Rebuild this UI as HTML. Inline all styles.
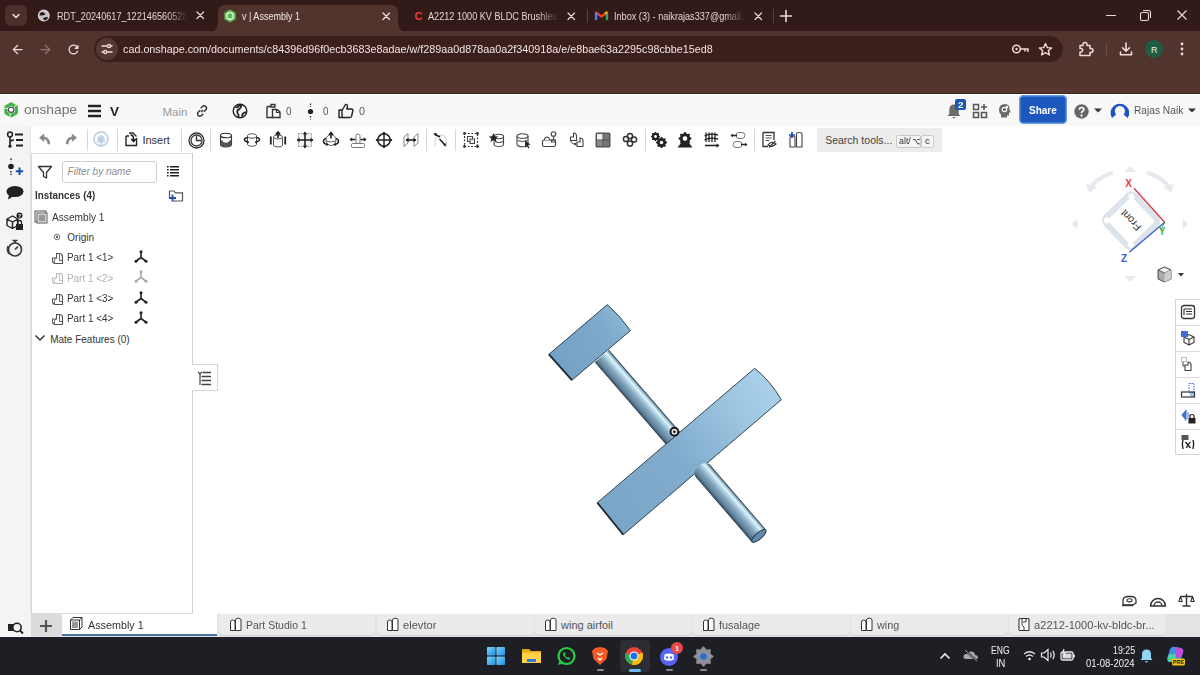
<!DOCTYPE html>
<html><head><meta charset="utf-8"><title>v | Assembly 1</title>
<style>
*{margin:0;padding:0;box-sizing:border-box}
html,body{width:1200px;height:675px;overflow:hidden;background:#fff;font-family:"Liberation Sans",sans-serif}
.a{position:absolute}
.t{position:absolute;white-space:nowrap;line-height:1;font-family:"Liberation Sans",sans-serif}
svg{position:absolute;overflow:visible}
</style></head><body>
<div class="a" style="left:0px;top:0px;width:1200px;height:31px;background:#311a17;"></div>
<div class="a" style="left:5px;top:5px;width:22px;height:21px;background:#4b302c;border-radius:6px;"></div>
<svg style="left:10px;top:10px;" width="12" height="12" viewBox="0 0 12 12"><path d="M3 4.5 L6 7.5 L9 4.5" fill="none" stroke="#eadcd8" stroke-width="1.6" stroke-linecap="round" stroke-linejoin="round"/></svg>
<svg style="left:208px;top:4px" width="200" height="28" viewBox="0 0 200 28"><path d="M0 28 Q10 28 10 18 L10 9 Q10 1 18 1 L182 1 Q190 1 190 9 L190 18 Q190 28 200 28 Z" fill="#52342f"/></svg>
<svg style="left:37px;top:9px;" width="14" height="14" viewBox="0 0 14 14"><circle cx="6.8" cy="6.5" r="5.4" fill="#c4c4c8" stroke="#dccfcc" stroke-width="1.1"/><path d="M2.6 5 Q3.8 2.6 6.3 3 Q6.8 4.4 8.6 4.8 Q7.8 6.8 5.2 6.2 Q3.8 6.8 2.6 6.2 Z" fill="#241417"/><path d="M5.8 9.8 Q7.6 7.6 10.8 8 Q11 10.2 8.6 11.2 Q7 11.4 5.8 9.8 Z" fill="#241417"/></svg>
<div class="t" style="left:56.70px;top:10.57px;font-size:11px;color:#e3d3cf;transform:scaleX(0.830);transform-origin:0.00px 0;width:161.4px;overflow:hidden;-webkit-mask-image:linear-gradient(90deg,#000 82%,transparent 98%);">RDT_20240617_1221465605285</div>
<div class="t" style="left:242.00px;top:10.87px;font-size:11px;color:#f3e7e4;transform:scaleX(0.820);transform-origin:0.00px 0;">v | Assembly 1</div>
<div class="t" style="left:428.20px;top:10.87px;font-size:11px;color:#e3d3cf;transform:scaleX(0.830);transform-origin:0.00px 0;width:161.4px;overflow:hidden;-webkit-mask-image:linear-gradient(90deg,#000 82%,transparent 98%);">A2212 1000 KV BLDC Brushless</div>
<div class="t" style="left:614.00px;top:10.87px;font-size:11px;color:#e3d3cf;transform:scaleX(0.830);transform-origin:0.00px 0;width:161.4px;overflow:hidden;-webkit-mask-image:linear-gradient(90deg,#000 82%,transparent 98%);">Inbox (3) - naikrajas337@gmail.com</div>
<svg style="left:194.75px;top:10.25px;" width="10.5" height="10.5" viewBox="0 0 10.5 10.5"><path d="M2 2 L8.5 8.5 M8.5 2 L2 8.5" stroke="#eadbd7" stroke-width="1.2" stroke-linecap="round"/></svg>
<svg style="left:380.75px;top:10.75px;" width="10.5" height="10.5" viewBox="0 0 10.5 10.5"><path d="M2 2 L8.5 8.5 M8.5 2 L2 8.5" stroke="#f3e7e4" stroke-width="1.2" stroke-linecap="round"/></svg>
<svg style="left:566.15px;top:10.75px;" width="10.5" height="10.5" viewBox="0 0 10.5 10.5"><path d="M2 2 L8.5 8.5 M8.5 2 L2 8.5" stroke="#eadbd7" stroke-width="1.2" stroke-linecap="round"/></svg>
<svg style="left:752.75px;top:10.75px;" width="10.5" height="10.5" viewBox="0 0 10.5 10.5"><path d="M2 2 L8.5 8.5 M8.5 2 L2 8.5" stroke="#eadbd7" stroke-width="1.2" stroke-linecap="round"/></svg>
<div class="a" style="left:587px;top:9px;width:1px;height:14px;background:#5e433f;"></div>
<div class="a" style="left:773px;top:9px;width:1px;height:14px;background:#5e433f;"></div>
<svg style="left:779px;top:9px;" width="14" height="14" viewBox="0 0 14 14"><path d="M7 1.5 V12.5 M1.5 7 H12.5" stroke="#eadbd7" stroke-width="1.6" stroke-linecap="round"/></svg>
<svg style="left:223px;top:9px;" width="14" height="14" viewBox="0 0 14 14"><path d="M7 0.5 L12.7 3.8 L12.7 10.2 L7 13.5 L1.3 10.2 L1.3 3.8 Z" fill="#59b94a"/><circle cx="7" cy="7" r="3.3" fill="none" stroke="#e9f5e6" stroke-width="1.4"/><path d="M7 3.7 V7" stroke="#59b94a" stroke-width="1.2"/></svg>
<div class="t" style="left:414.50px;top:11.37px;font-size:11px;color:#e0413a;font-weight:bold;">C</div>
<svg style="left:595px;top:10px;" width="13" height="11" viewBox="0 0 13 11"><path d="M1 10 V2.5 L6.5 6.5 L12 2.5 V10" fill="none" stroke="#ea4335" stroke-width="2.2" stroke-linejoin="round"/><path d="M1 10 V3" stroke="#4285f4" stroke-width="2.2"/><path d="M12 10 V3" stroke="#34a853" stroke-width="2.2"/><path d="M10 3.5 L12 2.2" stroke="#fbbc04" stroke-width="2.2"/></svg>
<div class="a" style="left:1106px;top:15px;width:10px;height:1px;background:#e8dbd7;"></div>
<svg style="left:1139px;top:9px;" width="13" height="13" viewBox="0 0 13 13"><rect x="1.5" y="3.5" width="8" height="8" rx="1.5" fill="none" stroke="#e8dbd7" stroke-width="1.1"/><path d="M4 1.5 H9.5 Q11.5 1.5 11.5 3.5 V9" fill="none" stroke="#e8dbd7" stroke-width="1.1"/></svg>
<svg style="left:1175px;top:8px;" width="14" height="14" viewBox="0 0 14 14"><path d="M2.5 2.5 L11.5 11.5 M11.5 2.5 L2.5 11.5" stroke="#e8dbd7" stroke-width="1.2"/></svg>
<div class="a" style="left:0px;top:31px;width:1200px;height:62px;background:#52342f;border-radius:0 9px 0 0;"></div>
<div class="a" style="left:0;top:31px;width:1200px;height:62px;background:#52342f;"></div>
<div class="a" style="left:0px;top:88px;width:1200px;height:5px;background:#56362f;"></div>
<div class="a" style="left:0px;top:93px;width:1200px;height:1px;background:#3e2824;"></div>
<div class="a" style="left:94px;top:36px;width:969px;height:26px;background:#3b1f1c;border-radius:13px;"></div>
<svg style="left:9.7px;top:41.7px;" width="15" height="15" viewBox="0 0 24 24"><path d="M20 11H7.83l5.59-5.59L12 4l-8 8 8 8 1.41-1.41L7.83 13H20v-2z" fill="#ecdcd8"/></svg>
<svg style="left:37.5px;top:41.7px;" width="15" height="15" viewBox="0 0 24 24"><path d="M12 4l-1.41 1.41L16.17 11H4v2h12.17l-5.58 5.59L12 20l8-8z" fill="#8f746f"/></svg>
<svg style="left:65.8px;top:41.8px;" width="15" height="15" viewBox="0 0 24 24"><path d="M17.65 6.35A7.958 7.958 0 0 0 12 4c-4.42 0-7.99 3.58-7.99 8s3.57 8 7.99 8c3.73 0 6.84-2.55 7.73-6h-2.08A5.99 5.99 0 0 1 12 18c-3.31 0-6-2.69-6-6s2.69-6 6-6c1.66 0 3.14.69 4.22 1.78L13 11h7V4l-2.35 2.35z" fill="#ecdcd8"/></svg>
<div class="a" style="left:96px;top:38px;width:22px;height:22px;border-radius:11px;background:#543833"></div>
<svg style="left:99px;top:41px;" width="16" height="16" viewBox="0 0 16 16"><path d="M3 5 H8.5 M11 5 H13 M3 11 H5 M7.5 11 H13" stroke="#ecdcd8" stroke-width="1.4" stroke-linecap="round"/><circle cx="10" cy="5" r="1.6" fill="none" stroke="#ecdcd8" stroke-width="1.3"/><circle cx="6.2" cy="11" r="1.6" fill="none" stroke="#ecdcd8" stroke-width="1.3"/></svg>
<div class="t" style="left:123.00px;top:43.87px;font-size:11px;color:#f0e4e1;transform:scaleX(0.980);transform-origin:0.00px 0;">cad.onshape.com/documents/c84396d96f0ecb3683e8adae/w/f289aa0d878aa0a2f340918a/e/e8bae63a2295c98cbbe15ed8</div>
<svg style="left:1011px;top:42px;" width="20" height="14" viewBox="0 0 20 14"><circle cx="5.5" cy="7" r="3.8" fill="none" stroke="#ecdcd8" stroke-width="1.5"/><circle cx="5.5" cy="7" r="1.2" fill="#ecdcd8"/><path d="M9.3 7 H17 V10 M14 7 V9.5" fill="none" stroke="#ecdcd8" stroke-width="1.5"/></svg>
<svg style="left:1038px;top:42px;" width="15" height="15" viewBox="0 0 15 15"><path d="M7.5 1.5 L9.3 5.6 L13.6 5.9 L10.3 8.7 L11.4 13 L7.5 10.7 L3.6 13 L4.7 8.7 L1.4 5.9 L5.7 5.6 Z" fill="none" stroke="#ecdcd8" stroke-width="1.4" stroke-linejoin="round"/></svg>
<svg style="left:1077px;top:41px;" width="17" height="17" viewBox="0 0 17 17"><path d="M3 4.5 H6 V3.5 A2 2 0 0 1 10 3.5 V4.5 H13 V7.5 H14 A2 2 0 0 1 14 11.5 H13 V14.5 H3 V11 H4 A1.7 1.7 0 0 0 4 7.6 H3 Z" fill="none" stroke="#ecdcd8" stroke-width="1.5" stroke-linejoin="round"/></svg>
<div class="a" style="left:1106px;top:44px;width:1px;height:12px;background:#6b4f4a;"></div>
<svg style="left:1118px;top:41px;" width="16" height="16" viewBox="0 0 16 16"><path d="M8 2 V10 M4.5 6.8 L8 10.2 L11.5 6.8 M2.5 11 V13.8 H13.5 V11" fill="none" stroke="#ecdcd8" stroke-width="1.6" stroke-linecap="round" stroke-linejoin="round"/></svg>
<div class="a" style="left:1145px;top:40px;width:18px;height:18px;border-radius:9px;background:#1e5d45"></div>
<div class="t" style="left:1151.00px;top:45.53px;font-size:9px;color:#e6efe9;">R</div>
<svg style="left:1179px;top:41px;" width="6" height="16" viewBox="0 0 6 16"><circle cx="3" cy="3" r="1.4" fill="#ecdcd8"/><circle cx="3" cy="8" r="1.4" fill="#ecdcd8"/><circle cx="3" cy="13" r="1.4" fill="#ecdcd8"/></svg>
<div class="a" style="left:0px;top:94px;width:1200px;height:32px;background:#f8f8f8;"></div>
<div class="a" style="left:0px;top:94px;width:1200px;height:1px;background:#fdfdfd;"></div>
<svg style="left:2px;top:101px;" width="18" height="18" viewBox="0 0 18 18"><path d="M9.10 2.80 L14.30 5.80 L14.30 11.80 L9.10 14.80 L3.90 11.80 L3.90 5.80 Z" fill="none" stroke="#41b34a" stroke-width="3.2" stroke-linejoin="round"/><path d="M11.60 6.30 L16.10 2.60 M7.90 11.80 L8.10 16.80 M6.30 7.60 L1.10 7.00" stroke="#f8f8f8" stroke-width="0.9"/><circle cx="9.1" cy="8.8" r="2.7" fill="#fff" stroke="#5a5560" stroke-width="1.3"/></svg>
<div class="t" style="left:24.00px;top:103.09px;font-size:13.5px;color:#737373;transform:scaleX(1.024);transform-origin:0.00px 0;">onshape</div>
<svg style="left:87px;top:104px;" width="15" height="14" viewBox="0 0 15 14"><path d="M1 2 H14 M1 7 H14 M1 12 H14" stroke="#222" stroke-width="2.4"/></svg>
<div class="t" style="left:110.00px;top:106.12px;font-size:12.5px;color:#222;font-weight:bold;transform:scaleX(1.083);transform-origin:0.00px 0;">V</div>
<div class="t" style="left:162.50px;top:107.16px;font-size:11.5px;color:#9b9b9b;">Main</div>
<svg style="left:195px;top:104px;" width="14" height="14" viewBox="0 0 14 14"><path d="M6 8 L8 6" stroke="#333" stroke-width="1.4"/><path d="M5.2 6.2 L3.2 8.2 A2.3 2.3 0 0 0 6.5 11.5 L8.3 9.7" fill="none" stroke="#333" stroke-width="1.4"/><path d="M8.8 7.8 L10.8 5.8 A2.3 2.3 0 0 0 7.5 2.5 L5.7 4.3" fill="none" stroke="#333" stroke-width="1.4"/></svg>
<svg style="left:232px;top:103px;" width="16" height="16" viewBox="0 0 16 16"><circle cx="8" cy="8" r="6.8" fill="none" stroke="#222" stroke-width="1.4"/><path d="M3.5 4 Q6 5 6.5 3 Q8 1.8 9.5 2.2 Q9 5 7 6.5 Q4.5 7 5.5 10 Q7 11 6.5 14 M10 13.5 Q10 10.5 12.5 9.5 L14.5 9" fill="none" stroke="#222" stroke-width="1.8"/></svg>
<svg style="left:265px;top:103px;" width="17" height="16" viewBox="0 0 17 16"><path d="M2 3.5 H6 M2 3.5 V14.5 H8" fill="none" stroke="#333" stroke-width="1.4"/><path d="M6 1.5 H10 V4 H6 Z" fill="none" stroke="#333" stroke-width="1.3"/><path d="M7.5 6.5 H12 L15 9 V14.5 H7.5 Z" fill="none" stroke="#333" stroke-width="1.4"/><path d="M11.5 6.5 V9.5 H15" fill="none" stroke="#333" stroke-width="1.2"/></svg>
<div class="t" style="left:286.00px;top:105.78px;font-size:10.5px;color:#555;transform:scaleX(0.944);transform-origin:0.00px 0;">0</div>
<svg style="left:307px;top:103px;" width="7" height="17" viewBox="0 0 7 17"><path d="M3.5 0.5 V4 M3.5 13 V16.5" stroke="#333" stroke-width="1.3" stroke-dasharray="1.5 1.2"/><circle cx="3.5" cy="8.5" r="2.6" fill="#222"/></svg>
<div class="t" style="left:322.50px;top:105.78px;font-size:10.5px;color:#555;transform:scaleX(0.944);transform-origin:0.00px 0;">0</div>
<svg style="left:337px;top:102px;" width="18" height="17" viewBox="0 0 18 17"><path d="M2 8 H5 V15.5 H2 Z M5 8.5 L8.5 2.5 Q10.5 2 10.5 4.5 L9.8 7 H14.5 Q16.2 7.3 15.8 9 L14.5 14.5 Q14 15.5 12.8 15.5 H5" fill="none" stroke="#222" stroke-width="1.4" stroke-linejoin="round"/></svg>
<div class="t" style="left:359.00px;top:105.78px;font-size:10.5px;color:#555;transform:scaleX(1.030);transform-origin:0.00px 0;">0</div>
<svg style="left:946px;top:100px;" width="16" height="19" viewBox="0 0 16 19"><path d="M8 4.5 Q3.3 4.5 3.3 10 V14 L1.5 16 H14.5 L12.7 14 V10 Q12.7 4.5 8 4.5 Z M6.3 17 A1.8 1.8 0 0 0 9.7 17" fill="#6b6b6b"/></svg>
<div class="a" style="left:955px;top:99px;width:11px;height:11px;background:#1c56b6;border-radius:2px;"></div>
<div class="t" style="left:957.80px;top:100.75px;font-size:8.5px;color:#fff;font-weight:bold;transform:scaleX(1.145);transform-origin:0.00px 0;">2</div>
<svg style="left:972px;top:103px;" width="17" height="17" viewBox="0 0 17 17"><rect x="1.5" y="1.5" width="5" height="5" fill="none" stroke="#555" stroke-width="1.5"/><rect x="1.5" y="9.5" width="5" height="5" fill="none" stroke="#555" stroke-width="1.5"/><rect x="9.5" y="9.5" width="5" height="5" fill="none" stroke="#555" stroke-width="1.5"/><path d="M12 1 V7 M9 4 H15" stroke="#555" stroke-width="1.6"/></svg>
<svg style="left:997px;top:102px;" width="17" height="17" viewBox="0 0 17 17"><path d="M8 2 Q2 2 2 8 Q2 11 4 12.5 V15.5 H10 V13.5 H12 V10.5 H14 L12.5 8 Q13 2 8 2 Z" fill="#6b6b6b"/><circle cx="7.5" cy="7.5" r="2.2" fill="none" stroke="#f8f8f8" stroke-width="1.2"/><circle cx="10" cy="5" r="1.2" fill="#f8f8f8"/></svg>
<div class="a" style="left:1019px;top:95px;width:48px;height:28.5px;background:#1b57bd;border-radius:5px;box-shadow:0 0 0 1.5px #6b9be6 inset;"></div>
<div class="t" style="left:1029.20px;top:104.77px;font-size:11px;color:#ffffff;font-weight:bold;transform:scaleX(0.906);transform-origin:0.00px 0;">Share</div>
<svg style="left:1074px;top:104px;" width="15" height="15" viewBox="0 0 15 15"><circle cx="7.5" cy="7.5" r="7.2" fill="#666"/><path d="M5.3 5.8 Q5.3 3.5 7.5 3.5 Q9.8 3.5 9.8 5.6 Q9.8 6.9 8.3 7.6 Q7.5 8 7.5 9.2" fill="none" stroke="#fff" stroke-width="1.7"/><circle cx="7.5" cy="11.6" r="1.1" fill="#fff"/></svg>
<svg style="left:1094px;top:108px;" width="8" height="5" viewBox="0 0 8 5"><path d="M0 0.5 H8 L4 4.5 Z" fill="#333"/></svg>
<svg style="left:1110px;top:100px;" width="20" height="20" viewBox="0 0 20 20"><path d="M2 18 A9.3 9.3 0 1 1 17.8 18 L13.6 14.6 A5.1 5.1 0 1 0 6.2 14.6 Z" fill="#1b52c4"/></svg>
<div class="t" style="left:1133.70px;top:105.27px;font-size:11px;color:#555;transform:scaleX(0.926);transform-origin:0.00px 0;">Rajas Naik</div>
<svg style="left:1188px;top:108px;" width="9" height="5" viewBox="0 0 9 5"><path d="M0 0.5 H8 L4 4.5 Z" fill="#333"/></svg>
<div class="a" style="left:0px;top:126px;width:31px;height:488px;background:#f4f4f4;"></div>
<div class="a" style="left:30px;top:126px;width:1px;height:488px;background:#e4e4e4;"></div>
<svg style="left:6px;top:131px;" width="19" height="18" viewBox="0 0 19 18"><circle cx="4" cy="3.5" r="2.4" fill="none" stroke="#222" stroke-width="1.5"/><path d="M4 6 V15 M4 11.5 Q4 9 8 9" fill="none" stroke="#222" stroke-width="1.6"/><circle cx="4" cy="15.2" r="1.6" fill="#222"/><path d="M9 3.5 H17 M10 9 H17 M10 14.5 H17" stroke="#222" stroke-width="1.8"/></svg>
<svg style="left:6px;top:158px;" width="19" height="19" viewBox="0 0 19 19"><path d="M5 0.5 V3.5 M5 13 V17" stroke="#222" stroke-width="1.4" stroke-dasharray="1.6 1.2"/><circle cx="5" cy="8.5" r="2.8" fill="#222"/><path d="M13.5 9.5 V17 M9.8 13.2 H17.2" stroke="#1c4fae" stroke-width="2"/></svg>
<svg style="left:5px;top:185px;" width="20" height="16" viewBox="0 0 20 16"><ellipse cx="10" cy="6.5" rx="8.5" ry="5.6" fill="#222"/><path d="M4 10 L3 14.5 L9 11" fill="#222"/></svg>
<svg style="left:5px;top:212px;" width="20" height="20" viewBox="0 0 20 20"><path d="M2 7 L7.5 4 L13 7 V13.5 L7.5 16.5 L2 13.5 Z M2 7 L7.5 10 L13 7 M7.5 10 V16.5" fill="none" stroke="#222" stroke-width="1.4" stroke-linejoin="round"/><rect x="11" y="12" width="7" height="6" fill="#222"/><path d="M12.5 12 V10.5 A2 2 0 0 1 16.5 10.5 V12" fill="none" stroke="#222" stroke-width="1.3"/><circle cx="14.5" cy="3.5" r="3" fill="#222"/><text x="14.5" y="5.5" font-size="5" fill="#fff" text-anchor="middle" font-family="Liberation Sans" font-weight="bold">?</text></svg>
<svg style="left:6px;top:239px;" width="18" height="19" viewBox="0 0 18 19"><circle cx="9" cy="10.5" r="6.5" fill="none" stroke="#333" stroke-width="1.6"/><path d="M6.5 1.5 H11.5 M9 1.5 V4 M9 10.5 L12 7.5" stroke="#333" stroke-width="1.6"/><path d="M2 7 A7.5 7.5 0 0 0 3 15" fill="none" stroke="#333" stroke-width="1.2"/></svg>
<div class="a" style="left:31px;top:126px;width:1169px;height:27px;background:#ffffff;"></div>
<svg style="left:37px;top:130px;" width="14" height="16" viewBox="0 0 14 16"><path d="M2 7.8 L7.2 3.6 V12 Z" fill="#888"/><path d="M6 7.8 Q11.6 7.8 11.9 14.2" fill="none" stroke="#888" stroke-width="2.5"/></svg>
<svg style="left:65px;top:130px;" width="14" height="16" viewBox="0 0 14 16"><path d="M12 7.8 L6.8 3.6 V12 Z" fill="#888"/><path d="M8 7.8 Q2.4 7.8 2.1 14.2" fill="none" stroke="#888" stroke-width="2.5"/></svg>
<div class="a" style="left:86.5px;top:129px;width:1px;height:22px;background:#d8d8d8;"></div>
<div class="a" style="left:116.5px;top:129px;width:1px;height:22px;background:#d8d8d8;"></div>
<div class="a" style="left:180.5px;top:129px;width:1px;height:22px;background:#d8d8d8;"></div>
<div class="a" style="left:210px;top:129px;width:1px;height:22px;background:#d8d8d8;"></div>
<div class="a" style="left:426px;top:129px;width:1px;height:22px;background:#d8d8d8;"></div>
<div class="a" style="left:455.3px;top:129px;width:1px;height:22px;background:#d8d8d8;"></div>
<div class="a" style="left:644.5px;top:129px;width:1px;height:22px;background:#d8d8d8;"></div>
<div class="a" style="left:754px;top:129px;width:1px;height:22px;background:#d8d8d8;"></div>
<svg style="left:92.3px;top:130.3px;" width="18" height="18" viewBox="0 0 18 18"><circle cx="9" cy="9" r="7" fill="#fff" stroke="#c4d2e3" stroke-width="1.8"/><path d="M5.2 12.5 Q4.5 5.5 9 5 Q13.5 5.5 12.8 12.5 Z" fill="#c3d3e8"/><path d="M9 8 V15.5" stroke="#b3c6df" stroke-width="1.3"/></svg>
<svg style="left:124px;top:131px;" width="15" height="16" viewBox="0 0 15 16"><path d="M2 5 H5 M2 5 V14.5 H12.5 V7" fill="none" stroke="#222" stroke-width="1.4"/><path d="M5 2 H9 L12.5 5.5" fill="none" stroke="#222" stroke-width="1.3"/><path d="M6.5 4 Q9.5 4 9.5 7.5 L9.5 10 M7.3 8 L9.5 10.5 L11.7 8" fill="none" stroke="#222" stroke-width="1.6"/></svg>
<div class="t" style="left:142.40px;top:134.57px;font-size:11px;color:#333;">Insert</div>
<svg style="left:187.5px;top:131.5px;" width="17" height="17" viewBox="0 0 17 17"><circle cx="8.5" cy="8.5" r="7.5" fill="none" stroke="#333" stroke-width="1.3"/><circle cx="8.5" cy="8.5" r="5.5" fill="none" stroke="#333" stroke-width="1.3"/><path d="M8.5 4 V8.5 H13" fill="none" stroke="#333" stroke-width="1.4"/></svg>
<svg style="left:216.5px;top:130.5px;" width="18" height="18" viewBox="0 0 18 18"><path d="M3.5 4.5 V13.5 A5.5 2.5 0 0 0 14.5 13.5 V4.5" fill="#fff" stroke="#333" stroke-width="1.1"/><path d="M3.5 9 Q6 9 6.5 11 Q9 12.5 11.5 11 Q12 9 14.5 9 V13.5 A5.5 2.5 0 0 1 3.5 13.5 Z" fill="#555"/><ellipse cx="9" cy="4.5" rx="5.5" ry="2.3" fill="#fff" stroke="#333" stroke-width="1.1"/></svg>
<svg style="left:242.5px;top:130.5px;" width="18" height="18" viewBox="0 0 18 18"><path d="M4.5 5 V13 A4.5 2.2 0 0 0 13.5 13 V5" fill="#fff" stroke="#555" stroke-width="1"/><ellipse cx="9" cy="5" rx="4.5" ry="2.2" fill="#fff" stroke="#555" stroke-width="1"/><path d="M5 11 Q1 10 1.5 8 Q2.5 6.5 5 6.5 M13 11 Q17 10 16.5 8 Q15.5 6.5 13 6.5" fill="none" stroke="#222" stroke-width="1.5"/><path d="M4 9.5 L6.5 11 L4.5 12.8 Z M14 9.5 L11.5 11 L13.5 12.8 Z" fill="#222"/></svg>
<svg style="left:268.5px;top:130.5px;" width="18" height="18" viewBox="0 0 18 18"><path d="M4.5 6 V14 A4.5 2 0 0 0 13.5 14 V6" fill="#fff" stroke="#555" stroke-width="1"/><ellipse cx="9" cy="6" rx="4.5" ry="2" fill="#fff" stroke="#555" stroke-width="1"/><path d="M1.8 5.5 V13.5 M16.2 5.5 V13.5" stroke="#222" stroke-width="1.8"/><path d="M9 7 V1.5 M6.8 3.6 L9 1 L11.2 3.6" fill="none" stroke="#222" stroke-width="1.6"/></svg>
<svg style="left:295.6px;top:130.5px;" width="18" height="18" viewBox="0 0 18 18"><rect x="2.5" y="2.5" width="13" height="13" fill="#f3f3f3" stroke="#aaa" stroke-width="0.8"/><path d="M9 1.5 V16.5 M1.5 9 H16.5" stroke="#222" stroke-width="1.6"/><path d="M9 0.5 L11.2 3.5 H6.8 Z M9 17.5 L11.2 14.5 H6.8 Z M0.5 9 L3.5 6.8 V11.2 Z M17.5 9 L14.5 6.8 V11.2 Z" fill="#222"/></svg>
<svg style="left:321.6px;top:130.5px;" width="18" height="18" viewBox="0 0 18 18"><ellipse cx="9" cy="9" rx="5" ry="5.5" fill="#fff" stroke="#666" stroke-width="1"/><path d="M4 10 Q9 12 14 10" fill="none" stroke="#666" stroke-width="1"/><path d="M9 7.5 V2.5 M7 4 L9 1.5 L11 4" fill="none" stroke="#222" stroke-width="1.6"/><path d="M5 13.5 Q1 12.5 1.5 9.5 Q2 8 4 7.5 M13 13.5 Q17 12.5 16.5 9.5 Q16 8 14 7.5" fill="none" stroke="#222" stroke-width="1.5"/><path d="M4.5 12 L6.8 13.6 L4.5 15.2 Z M13.5 12 L11.2 13.6 L13.5 15.2 Z" fill="#222"/></svg>
<svg style="left:348.7px;top:130.5px;" width="18" height="18" viewBox="0 0 18 18"><rect x="7" y="3" width="4" height="10" rx="2" fill="#fff" stroke="#777" stroke-width="1"/><rect x="2.5" y="12.5" width="13" height="4" rx="1" fill="#fff" stroke="#777" stroke-width="1"/><path d="M1 8.5 H6.5 M11.5 8.5 H17" stroke="#222" stroke-width="1.6"/><path d="M0.5 8.5 L3.2 6.5 V10.5 Z M17.5 8.5 L14.8 6.5 V10.5 Z" fill="#222"/></svg>
<svg style="left:374.7px;top:130.5px;" width="18" height="18" viewBox="0 0 18 18"><circle cx="9" cy="9" r="6.2" fill="none" stroke="#222" stroke-width="1.5"/><path d="M9 1 V17 M1 9 H17" stroke="#222" stroke-width="1.5"/><path d="M9 0.5 L10.8 3 H7.2 Z M9 17.5 L10.8 15 H7.2 Z M0.5 9 L3 7.2 V10.8 Z M17.5 9 L15 7.2 V10.8 Z" fill="#222"/></svg>
<svg style="left:401.8px;top:130.5px;" width="18" height="18" viewBox="0 0 18 18"><path d="M2 6 L6 2.5 V12 L2 15.5 Z M12 6 L16 2.5 V12 L12 15.5 Z" fill="#fff" stroke="#888" stroke-width="1"/><path d="M4 9 H14" stroke="#222" stroke-width="1.6"/><path d="M3.5 9 L6.5 6.8 V11.2 Z M14.5 9 L11.5 6.8 V11.2 Z" fill="#222"/></svg>
<svg style="left:432.3px;top:130.5px;" width="18" height="18" viewBox="0 0 18 18"><path d="M3 15.5 V10 Q3 5 9 4 Q14 4 14.5 10 V15.5" fill="none" stroke="#ccc" stroke-width="1"/><path d="M2.5 3 L8 6 M7.5 8 L13 14" stroke="#222" stroke-width="1.6"/><path d="M1.5 2.5 L5 2 L3.5 5 Z M14 15.5 L13.5 12 L11 14 Z" fill="#222"/></svg>
<svg style="left:461.5px;top:130.5px;" width="18" height="18" viewBox="0 0 18 18"><rect x="2.5" y="2.5" width="13" height="13" fill="none" stroke="#333" stroke-width="1.2" stroke-dasharray="1.8 1.6"/><circle cx="2.5" cy="2.5" r="1.4" fill="#333"/><circle cx="15.5" cy="2.5" r="1.4" fill="#333"/><circle cx="2.5" cy="15.5" r="1.4" fill="#333"/><circle cx="15.5" cy="15.5" r="1.4" fill="#333"/><rect x="5.5" y="5.5" width="5" height="5" fill="#fff" stroke="#444" stroke-width="1"/><rect x="8" y="8" width="4.5" height="4.5" fill="#eee" stroke="#444" stroke-width="1"/></svg>
<svg style="left:487.5px;top:130.5px;" width="18" height="18" viewBox="0 0 18 18"><path d="M6 5.5 V14 A5 2.2 0 0 0 15.5 14 V5.5" fill="#fff" stroke="#444" stroke-width="1.1"/><ellipse cx="10.8" cy="5.5" rx="4.8" ry="2.2" fill="#fff" stroke="#444" stroke-width="1.1"/><path d="M7 10.5 Q10.5 12.5 15 10.5" fill="none" stroke="#444" stroke-width="1.2"/><path d="M5.5 2 L6.9 5.2 L10.3 5.4 L7.7 7.6 L8.5 11 L5.5 9.1 L2.5 11 L3.3 7.6 L0.7 5.4 L4.1 5.2 Z" fill="#222"/></svg>
<svg style="left:513.5px;top:130.5px;" width="18" height="18" viewBox="0 0 18 18"><path d="M3 5 V13.5 A5.5 2.3 0 0 0 14 13.5 V5" fill="#fff" stroke="#444" stroke-width="1.1"/><ellipse cx="8.5" cy="5" rx="5.5" ry="2.3" fill="#fff" stroke="#444" stroke-width="1.1"/><path d="M3.5 9.5 Q8.5 11.5 13.5 9.5" fill="none" stroke="#444" stroke-width="1"/><path d="M11 9.5 L16.5 13.5 L14 14 L15.5 17 L14.2 17.5 L12.8 14.6 L11 16.2 Z" fill="#222"/></svg>
<svg style="left:540.6px;top:130.5px;" width="18" height="18" viewBox="0 0 18 18"><rect x="1.5" y="9" width="13" height="6.5" rx="1.5" fill="#fff" stroke="#444" stroke-width="1.2"/><path d="M3.5 9 Q3.5 6 6 6 Q8.5 6 8.5 9" fill="#fff" stroke="#444" stroke-width="1.1"/><circle cx="12.5" cy="3" r="2.3" fill="#fff" stroke="#444" stroke-width="1.1"/><path d="M12.5 5.5 V9 M10.5 9 H14.5 V11 H10.5 Z" fill="none" stroke="#444" stroke-width="1.1"/></svg>
<svg style="left:567.7px;top:130.5px;" width="18" height="18" viewBox="0 0 18 18"><path d="M2.5 6 H5.5 V2 Q8.5 2 8.5 5 V9.5 H2.5 Z" fill="#fff" stroke="#444" stroke-width="1.1"/><path d="M9 11 H12 V7 Q15 7 15 10 V15.5 H9 Z" fill="#fff" stroke="#444" stroke-width="1.1"/><path d="M3 10 Q3 13 7.5 13" fill="none" stroke="#444" stroke-width="1"/><path d="M6.5 11.5 L9 13 L6.5 14.5 Z" fill="#222"/></svg>
<svg style="left:593.7px;top:130.5px;" width="18" height="18" viewBox="0 0 18 18"><rect x="1.5" y="1.5" width="15" height="15" rx="1.5" fill="#555"/><rect x="3" y="3" width="5.5" height="5.5" fill="#f0f0f0"/><rect x="9.5" y="3" width="5.5" height="5.5" fill="#777"/><rect x="3" y="9.5" width="5.5" height="5.5" fill="#888"/><rect x="9.5" y="9.5" width="5.5" height="5.5" fill="#777"/></svg>
<svg style="left:620.8px;top:130.5px;" width="18" height="18" viewBox="0 0 18 18"><circle cx="5" cy="8" r="2.6" fill="none" stroke="#333" stroke-width="1.5"/><circle cx="9" cy="5" r="2.6" fill="none" stroke="#333" stroke-width="1.5"/><circle cx="13" cy="8.5" r="2.6" fill="none" stroke="#333" stroke-width="1.5"/><circle cx="9" cy="12.5" r="2.6" fill="none" stroke="#333" stroke-width="1.5"/></svg>
<svg style="left:649.7px;top:130.5px;" width="18" height="18" viewBox="0 0 18 18"><polygon points="9.50,5.50 8.16,6.60 8.33,8.33 6.60,8.16 5.50,9.50 4.40,8.16 2.67,8.33 2.84,6.60 1.50,5.50 2.84,4.40 2.67,2.67 4.40,2.84 5.50,1.50 6.60,2.84 8.33,2.67 8.16,4.40" fill="#222" stroke="#222" stroke-width="1.2" stroke-linejoin="round"/><circle cx="5.5" cy="5.5" r="1.40" fill="#fff"/><polygon points="16.50,11.50 14.83,12.88 15.04,15.04 12.88,14.83 11.50,16.50 10.12,14.83 7.96,15.04 8.17,12.88 6.50,11.50 8.17,10.12 7.96,7.96 10.12,8.17 11.50,6.50 12.88,8.17 15.04,7.96 14.83,10.12" fill="#222" stroke="#222" stroke-width="1.2" stroke-linejoin="round"/><circle cx="11.5" cy="11.5" r="1.75" fill="#fff"/></svg>
<svg style="left:676.3px;top:130.5px;" width="18" height="18" viewBox="0 0 18 18"><polygon points="15.00,7.50 12.99,9.15 13.24,11.74 10.65,11.49 9.00,13.50 7.35,11.49 4.76,11.74 5.01,9.15 3.00,7.50 5.01,5.85 4.76,3.26 7.35,3.51 9.00,1.50 10.65,3.51 13.24,3.26 12.99,5.85" fill="#222" stroke="#222" stroke-width="1.2" stroke-linejoin="round"/><circle cx="9" cy="7.5" r="2.10" fill="#fff"/><path d="M1.5 16.5 H16.5 L13 12 H5 Z" fill="#222"/><circle cx="9" cy="7.5" r="2.3" fill="#fff"/></svg>
<svg style="left:703.0px;top:130.5px;" width="18" height="18" viewBox="0 0 18 18"><path d="M3 1.5 V11 M6 1.5 V11 M9 1.5 V11 M12 1.5 V11" stroke="#222" stroke-width="1.3"/><path d="M1.5 5 Q7 2 15 4 M1.5 9 Q7 6 15 8" fill="none" stroke="#222" stroke-width="1.3"/><path d="M2 14.5 H14" stroke="#222" stroke-width="1.6"/><path d="M16.5 14.5 L13.5 12.3 V16.7 Z" fill="#222"/></svg>
<svg style="left:729.7px;top:130.5px;" width="18" height="18" viewBox="0 0 18 18"><rect x="6" y="1.5" width="9" height="6" rx="3" fill="#fff" stroke="#777" stroke-width="1"/><rect x="3" y="10.5" width="9" height="6" rx="3" fill="#fff" stroke="#777" stroke-width="1"/><path d="M1.5 4.5 H7 M11 13.5 H16.5" stroke="#222" stroke-width="1.5"/><path d="M0.5 4.5 L3 2.8 V6.2 Z M17.5 13.5 L15 11.8 V15.2 Z" fill="#222"/></svg>
<svg style="left:760.3px;top:130.5px;" width="18" height="18" viewBox="0 0 18 18"><path d="M3 1.5 H14 V9 M3 1.5 V15.5 H8" fill="none" stroke="#333" stroke-width="1.3"/><path d="M5.5 4.5 H11.5 M5.5 7 H11.5 M5.5 9.5 H9" stroke="#555" stroke-width="1.1"/><path d="M8 14 Q11.5 9.5 16 13 Q12 17 8 14 Z" fill="none" stroke="#333" stroke-width="1.2"/><path d="M9 16.5 L15.5 10" stroke="#333" stroke-width="1.1"/></svg>
<svg style="left:787.0px;top:130.5px;" width="18" height="18" viewBox="0 0 18 18"><path d="M3 6.5 V16 H8 V6.5 Q8 5 5.5 5 Q3 5 3 6.5 Z" fill="#fff" stroke="#444" stroke-width="1.1"/><path d="M9.5 3 V16 H15 V3 Q15 1.5 12.2 1.5 Q9.5 1.5 9.5 3 Z" fill="#fff" stroke="#444" stroke-width="1.1"/><path d="M5 1 V7 M2 4 H8" stroke="#1c4fae" stroke-width="1.7"/></svg>
<div class="a" style="left:817px;top:127.5px;width:125px;height:24.5px;background:#ececec;border-radius:2px;"></div>
<div class="t" style="left:825.20px;top:134.59px;font-size:10.5px;color:#444;">Search tools...</div>
<div class="a" style="left:896px;top:134.5px;width:24.5px;height:13px;background:#f4f4f4;border:1px solid #c9c9c9;border-radius:2px;"></div>
<div class="t" style="left:898.50px;top:137.44px;font-size:8.5px;color:#333;transform:scaleX(1.040);transform-origin:0.00px 0;">alt/</div>
<svg style="left:912.6px;top:137.8px;" width="7" height="7" viewBox="0 0 7 7"><path d="M0.3 1.5 H2.3 L4.6 5.8 H6.8 M4.3 1.5 H6.8" fill="none" stroke="#333" stroke-width="0.9"/></svg>
<div class="a" style="left:920.5px;top:134.5px;width:13.5px;height:13px;background:#f4f4f4;border:1px solid #c9c9c9;border-radius:2px;"></div>
<div class="t" style="left:924.60px;top:137.03px;font-size:9px;color:#333;transform:scaleX(1.089);transform-origin:0.00px 0;">c</div>
<div class="a" style="left:31px;top:153px;width:162px;height:461px;background:#ffffff;border:1px solid #dadada;border-right:1.5px solid #d2d2d2;"></div>
<svg style="left:37px;top:164px;" width="16" height="16" viewBox="0 0 16 16"><path d="M1.5 2.5 H14.5 L9.5 8.5 V14 L6.5 12.5 V8.5 Z" fill="none" stroke="#333" stroke-width="1.3" stroke-linejoin="round"/></svg>
<div class="a" style="left:62px;top:160.5px;width:95px;height:22px;background:#ffffff;border:1px solid #d0d0d0;border-radius:3px;"></div>
<div class="t" style="left:67.60px;top:167.00px;font-size:10px;color:#8d8d8d;font-style:italic;">Filter by name</div>
<svg style="left:166px;top:165px;" width="14" height="13" viewBox="0 0 14 13"><path d="M1 1.8 H2.6 M1 4.8 H2.6 M1 7.8 H2.6 M1 10.8 H2.6" stroke="#222" stroke-width="1.5"/><path d="M4 1.8 H13 M4 4.8 H13 M4 7.8 H13 M4 10.8 H13" stroke="#222" stroke-width="1.5"/></svg>
<svg style="left:167px;top:188px;" width="17" height="15" viewBox="0 0 17 15"><path d="M2.5 11 V3 H7 L8.5 4.8 H15.5 V13 H6" fill="none" stroke="#555" stroke-width="1.2"/><path d="M5.5 6.5 V13.5 M2 10 H9" stroke="#1c4fae" stroke-width="1.8"/></svg>
<div class="t" style="left:34.70px;top:191.00px;font-size:10px;color:#333;font-weight:bold;transform:scaleX(0.984);transform-origin:0.00px 0;">Instances (4)</div>
<svg style="left:34px;top:210px;" width="15" height="14" viewBox="0 0 15 14"><rect x="1" y="1" width="11" height="11" fill="#fff" stroke="#555" stroke-width="1"/><rect x="3" y="3" width="10" height="10" fill="#fff" stroke="#555" stroke-width="1"/><rect x="4.5" y="4.5" width="7" height="7" fill="#999"/></svg>
<div class="t" style="left:51.90px;top:212.90px;font-size:10px;color:#333;transform:scaleX(1.015);transform-origin:0.00px 0;">Assembly 1</div>
<svg style="left:53px;top:233px;" width="8" height="8" viewBox="0 0 8 8"><circle cx="4" cy="4" r="2.8" fill="none" stroke="#777" stroke-width="1"/><circle cx="4" cy="4" r="1.2" fill="#555"/></svg>
<div class="t" style="left:67.30px;top:233.10px;font-size:10px;color:#333;">Origin</div>
<svg style="left:50.5px;top:252.0px;" width="14" height="13" viewBox="0 0 14 13"><path d="M1.5 6 H5.5 V1.5 H8.5 Q11.5 1.5 11.5 4.5 V11.5 H4.5 Q1.5 11.5 1.5 8.5 Z" fill="none" stroke="#555" stroke-width="1.1"/><path d="M5.5 6 Q3.5 6 3.5 8.5 V11 M8.5 1.5 V8.5 H11.5" fill="none" stroke="#555" stroke-width="0.9"/></svg>
<div class="t" style="left:67.30px;top:253.20px;font-size:10px;color:#333;transform:scaleX(0.989);transform-origin:0.00px 0;">Part 1 &lt;1&gt;</div>
<svg style="left:134px;top:250.0px;" width="14" height="14" viewBox="0 0 14 14"><path d="M7 2 V7.5 L2.2 11 M7 7.5 L11.8 11" fill="none" stroke="#222" stroke-width="1.6"/><circle cx="7" cy="1.8" r="1.5" fill="#222"/><circle cx="2" cy="11.3" r="1.5" fill="#222"/><circle cx="12" cy="11.3" r="1.5" fill="#222"/></svg>
<svg style="left:50.5px;top:272.3px;" width="14" height="13" viewBox="0 0 14 13"><path d="M1.5 6 H5.5 V1.5 H8.5 Q11.5 1.5 11.5 4.5 V11.5 H4.5 Q1.5 11.5 1.5 8.5 Z" fill="none" stroke="#bbb" stroke-width="1.1"/><path d="M5.5 6 Q3.5 6 3.5 8.5 V11 M8.5 1.5 V8.5 H11.5" fill="none" stroke="#bbb" stroke-width="0.9"/></svg>
<div class="t" style="left:67.30px;top:273.50px;font-size:10px;color:#b0b0b0;transform:scaleX(0.989);transform-origin:0.00px 0;">Part 1 &lt;2&gt;</div>
<svg style="left:134px;top:270.3px;" width="14" height="14" viewBox="0 0 14 14"><path d="M7 2 V7.5 L2.2 11 M7 7.5 L11.8 11" fill="none" stroke="#aaa" stroke-width="1.6"/><circle cx="7" cy="1.8" r="1.5" fill="#aaa"/><circle cx="2" cy="11.3" r="1.5" fill="#aaa"/><circle cx="12" cy="11.3" r="1.5" fill="#aaa"/></svg>
<svg style="left:50.5px;top:292.5px;" width="14" height="13" viewBox="0 0 14 13"><path d="M1.5 6 H5.5 V1.5 H8.5 Q11.5 1.5 11.5 4.5 V11.5 H4.5 Q1.5 11.5 1.5 8.5 Z" fill="none" stroke="#555" stroke-width="1.1"/><path d="M5.5 6 Q3.5 6 3.5 8.5 V11 M8.5 1.5 V8.5 H11.5" fill="none" stroke="#555" stroke-width="0.9"/></svg>
<div class="t" style="left:67.30px;top:293.70px;font-size:10px;color:#333;transform:scaleX(0.989);transform-origin:0.00px 0;">Part 1 &lt;3&gt;</div>
<svg style="left:134px;top:290.5px;" width="14" height="14" viewBox="0 0 14 14"><path d="M7 2 V7.5 L2.2 11 M7 7.5 L11.8 11" fill="none" stroke="#222" stroke-width="1.6"/><circle cx="7" cy="1.8" r="1.5" fill="#222"/><circle cx="2" cy="11.3" r="1.5" fill="#222"/><circle cx="12" cy="11.3" r="1.5" fill="#222"/></svg>
<svg style="left:50.5px;top:312.7px;" width="14" height="13" viewBox="0 0 14 13"><path d="M1.5 6 H5.5 V1.5 H8.5 Q11.5 1.5 11.5 4.5 V11.5 H4.5 Q1.5 11.5 1.5 8.5 Z" fill="none" stroke="#555" stroke-width="1.1"/><path d="M5.5 6 Q3.5 6 3.5 8.5 V11 M8.5 1.5 V8.5 H11.5" fill="none" stroke="#555" stroke-width="0.9"/></svg>
<div class="t" style="left:67.30px;top:313.90px;font-size:10px;color:#333;transform:scaleX(0.989);transform-origin:0.00px 0;">Part 1 &lt;4&gt;</div>
<svg style="left:134px;top:310.7px;" width="14" height="14" viewBox="0 0 14 14"><path d="M7 2 V7.5 L2.2 11 M7 7.5 L11.8 11" fill="none" stroke="#222" stroke-width="1.6"/><circle cx="7" cy="1.8" r="1.5" fill="#222"/><circle cx="2" cy="11.3" r="1.5" fill="#222"/><circle cx="12" cy="11.3" r="1.5" fill="#222"/></svg>
<svg style="left:34px;top:333px;" width="12" height="10" viewBox="0 0 12 10"><path d="M1.5 2.5 L6 7 L10.5 2.5" fill="none" stroke="#333" stroke-width="1.5"/></svg>
<div class="t" style="left:50.20px;top:334.60px;font-size:10px;color:#333;">Mate Features (0)</div>
<div class="a" style="left:192px;top:364px;width:25.5px;height:26.5px;background:#ffffff;border:1.5px solid #d6d6d6;border-left:none;"></div>
<svg style="left:196px;top:370px;" width="18" height="17" viewBox="0 0 18 17"><path d="M4 3.5 V15" stroke="#333" stroke-width="1.1"/><path d="M2 1.8 L4 3.8 L6 1.8" fill="none" stroke="#333" stroke-width="1.1"/><path d="M6.5 2.5 H15 M5.5 6.5 H15 M5.5 10.5 H15 M5.5 14.5 H15" stroke="#444" stroke-width="1.3"/></svg>
<svg style="left:0;top:0" width="1200" height="675" viewBox="0 0 1200 675"><defs><linearGradient id="rg" gradientUnits="userSpaceOnUse" x1="595.03" y1="362.07" x2="608.77" y2="350.13"><stop offset="0" stop-color="#3a4e60"/><stop offset="0.15" stop-color="#5f8199"/><stop offset="0.45" stop-color="#86a9c0"/><stop offset="0.68" stop-color="#b8dbeb"/><stop offset="0.78" stop-color="#e2f6fb"/><stop offset="0.9" stop-color="#9cc2d8"/><stop offset="1" stop-color="#3f5466"/></linearGradient><linearGradient id="wg" gradientUnits="userSpaceOnUse" x1="600" y1="520" x2="780" y2="385"><stop offset="0" stop-color="#79a5c7"/><stop offset="0.45" stop-color="#81accd"/><stop offset="0.8" stop-color="#9fc7e2"/><stop offset="1" stop-color="#acd1ea"/></linearGradient><linearGradient id="wg2" gradientUnits="userSpaceOnUse" x1="740" y1="370" x2="760" y2="395"><stop offset="0" stop-color="#ffffff" stop-opacity="0.0"/><stop offset="1" stop-color="#5d8bb0" stop-opacity="0.25"/></linearGradient><linearGradient id="eg" gradientUnits="userSpaceOnUse" x1="550" y1="370" x2="630" y2="315"><stop offset="0" stop-color="#72a0c4"/><stop offset="0.7" stop-color="#7eaacb"/><stop offset="1" stop-color="#8fbad8"/></linearGradient></defs><polygon points="595.03,362.07 671.13,449.97 684.87,438.03 608.77,350.13" fill="url(#rg)"/><path d="M595.03,362.07 L671.13,449.97 M684.87,438.03 L608.77,350.13" stroke="#2b3a48" stroke-width="0.9" fill="none"/><path d="M754.70,368.30 Q770.5 381 781.30,399.70 L623.30,534.70 L597.30,502.70 Z" fill="url(#wg)" stroke="#33444f" stroke-width="1" stroke-linejoin="round"/><path d="M597.30,502.70 L623.30,534.70" stroke="#1e2a33" stroke-width="1.8"/><linearGradient id="rg2" gradientUnits="userSpaceOnUse" x1="695.43" y1="476.17" x2="709.17" y2="464.23"><stop offset="0" stop-color="#3a4e60"/><stop offset="0.15" stop-color="#5f8199"/><stop offset="0.45" stop-color="#86a9c0"/><stop offset="0.68" stop-color="#b8dbeb"/><stop offset="0.78" stop-color="#e2f6fb"/><stop offset="0.9" stop-color="#9cc2d8"/><stop offset="1" stop-color="#3f5466"/></linearGradient><path d="M709.17,464.23 A9.1 5.46 -41.0 0 0 695.43,476.17 L752.03,541.87 L765.77,529.93 Z" fill="url(#rg2)"/><path d="M695.43,476.17 L752.03,541.87 M765.77,529.93 L709.17,464.23" stroke="#2b3a48" stroke-width="0.9" fill="none"/><ellipse cx="758.90" cy="535.90" rx="9.10" ry="3.2" transform="rotate(-41.0 758.90 535.90)" fill="#5f8cae" stroke="#2b3a48" stroke-width="1"/><path d="M607.40,304.60 Q620.5 316.3 630.40,330.60 L571.90,380.20 L548.90,354.30 Z" fill="url(#eg)" stroke="#33444f" stroke-width="1" stroke-linejoin="round"/><path d="M548.90,354.30 L571.90,380.20" stroke="#1e2a33" stroke-width="1.8"/><circle cx="674.4" cy="431.7" r="3.9" fill="#e8e8e8" stroke="#1a1a1a" stroke-width="2.1"/><circle cx="674.4" cy="431.7" r="1.3" fill="#111"/></svg>
<svg style="left:0;top:0" width="1200" height="675" viewBox="0 0 1200 675"><g fill="none" stroke="#e6eaef" stroke-width="4"><path d="M1113 172.5 Q1099 177 1091.5 186"/><path d="M1147 172.5 Q1161 177 1168.5 186"/></g><path d="M1086 184 L1097 187 L1089 193 Z" fill="#e6eaef"/><path d="M1174 184 L1163 187 L1171 193 Z" fill="#e6eaef"/><path d="M1130 165.5 L1135.5 172 H1124.5 Z" fill="#e6eaef"/><path d="M1130 282 L1135.5 276 H1124.5 Z" fill="#e6eaef"/><path d="M1071.5 224 L1077.5 218.5 V229.5 Z" fill="#e6eaef"/><path d="M1188.5 224 L1182.5 218.5 V229.5 Z" fill="#e6eaef"/><g transform="translate(1131.1 220.8) rotate(46)"><rect x="-20" y="-20" width="40" height="40" rx="5" fill="#fff" stroke="#dde3ea" stroke-width="6"/><rect x="-15" y="-15" width="30" height="30" rx="8" fill="#fff"/><circle cx="-17" cy="-17" r="3" fill="#fff"/><circle cx="17" cy="17" r="3" fill="#fff"/><circle cx="-17" cy="17" r="3" fill="#fff"/></g><path d="M1134 188.3 L1164.7 222.3" stroke="#d9364a" stroke-width="1.3"/><path d="M1164.7 222.3 L1129.3 252.3" stroke="#3b5bd0" stroke-width="1.3"/><path d="M1164.7 222.3 L1161 230" stroke="#3aa33a" stroke-width="1"/><text x="1128.7" y="187" font-family="Liberation Sans" font-size="10" font-weight="bold" fill="#e04050" text-anchor="middle">X</text><text x="1162" y="235" font-family="Liberation Sans" font-size="10" font-weight="bold" fill="#44b044" text-anchor="middle">Y</text><text x="1124" y="262" font-family="Liberation Sans" font-size="10" font-weight="bold" fill="#4060d0" text-anchor="middle">Z</text><text x="0" y="3" font-family="Liberation Sans" font-size="10.5" fill="#333" text-anchor="middle" transform="translate(1131.3 219.7) rotate(-134)">Front</text><path d="M1158 270 L1164.5 267 L1171 270 V279 L1164.5 282 L1158 279 Z" fill="#aaa" stroke="#444" stroke-width="0.9"/><path d="M1158 270 L1164.5 273 L1171 270 L1164.5 267 Z" fill="#eee" stroke="#444" stroke-width="0.8"/><path d="M1164.5 273 V282 L1171 279 V270 Z" fill="#ccc"/><path d="M1178 273 H1184 L1181 276.5 Z" fill="#333"/></svg>
<div class="a" style="left:1174.5px;top:299px;width:26px;height:156px;background:#ffffff;border:1px solid #d5d5d5;border-right:none;"></div>
<div class="a" style="left:1175px;top:324.7px;width:25px;height:1px;background:#dedede;"></div>
<div class="a" style="left:1175px;top:350.8px;width:25px;height:1px;background:#dedede;"></div>
<div class="a" style="left:1175px;top:376.7px;width:25px;height:1px;background:#dedede;"></div>
<div class="a" style="left:1175px;top:402.5px;width:25px;height:1px;background:#dedede;"></div>
<div class="a" style="left:1175px;top:428.7px;width:25px;height:1px;background:#dedede;"></div>
<svg style="left:1180px;top:304px;" width="16" height="16" viewBox="0 0 16 16"><rect x="1.5" y="1.5" width="13" height="13" rx="2.5" fill="none" stroke="#333" stroke-width="1.3"/><path d="M4 5 H12 M6 7.5 H12 M6 10 H12 M4 5 V11" stroke="#333" stroke-width="1.1"/></svg>
<svg style="left:1180px;top:330px;" width="16" height="16" viewBox="0 0 16 16"><path d="M4 7 L9 4.5 L14 7 V12.5 L9 15 L4 12.5 Z M4 7 L9 9.5 L14 7 M9 9.5 V15" fill="#fff" stroke="#333" stroke-width="1.1"/><rect x="1" y="1" width="7" height="6" fill="#3e6fd0"/></svg>
<svg style="left:1180px;top:356px;" width="16" height="16" viewBox="0 0 16 16"><rect x="1.5" y="1.5" width="5" height="4" fill="none" stroke="#777" stroke-width="1" stroke-dasharray="1 1"/><path d="M5 9 H8 V6 Q11 6 11 9 V14.5 H5 Z" fill="none" stroke="#444" stroke-width="1.1"/><path d="M3 6 V10 H5" fill="none" stroke="#444" stroke-width="1"/></svg>
<svg style="left:1180px;top:382px;" width="16" height="16" viewBox="0 0 16 16"><rect x="9" y="1.5" width="5" height="9" fill="none" stroke="#3e6fd0" stroke-width="1" stroke-dasharray="1.5 1"/><rect x="1.5" y="10" width="13" height="5" fill="none" stroke="#333" stroke-width="1.2"/><circle cx="12" cy="12.5" r="1.5" fill="none" stroke="#3e6fd0" stroke-width="0.9"/></svg>
<svg style="left:1180px;top:408px;" width="16" height="16" viewBox="0 0 16 16"><path d="M6 1.5 L1.5 7 L6 13 Z" fill="#3e6fd0"/><path d="M6 1.5 L10.5 7 L6 13 Z" fill="#9bb8e8"/><rect x="8.5" y="10" width="7" height="5.5" fill="#222"/><path d="M10 10 V8.5 A2 2 0 0 1 14 8.5 V10" fill="none" stroke="#222" stroke-width="1.2"/></svg>
<svg style="left:1180px;top:434px;" width="16" height="16" viewBox="0 0 16 16"><rect x="1.5" y="1" width="7" height="5" fill="#555"/><path d="M3 6 Q1.5 10 3 15" fill="none" stroke="#222" stroke-width="1.4"/><path d="M13 6 Q14.5 10 13 15" fill="none" stroke="#222" stroke-width="1.4"/><path d="M5.5 8 L10.5 14 M10.5 8 Q7.5 10 6.5 14" fill="none" stroke="#222" stroke-width="1.4"/></svg>
<svg style="left:1121px;top:594px;" width="17" height="14" viewBox="0 0 17 14"><path d="M2 11 V6.5 Q2 2.5 7.5 2.5 H10 Q15 2.5 15 6.5 V9 L12 11 Z" fill="none" stroke="#333" stroke-width="1.3" stroke-linejoin="round"/><ellipse cx="8.5" cy="6.3" rx="2.6" ry="1.6" fill="none" stroke="#333" stroke-width="1.1"/><path d="M1 11.5 H12" stroke="#333" stroke-width="1.4"/></svg>
<svg style="left:1149px;top:593px;" width="18" height="15" viewBox="0 0 18 15"><path d="M1.5 13 A7.5 7.5 0 0 1 16.5 13 Z" fill="none" stroke="#333" stroke-width="1.5" stroke-linejoin="round"/><path d="M5 13 A4 4 0 0 1 13 13" fill="none" stroke="#333" stroke-width="1.3"/></svg>
<svg style="left:1178px;top:593px;" width="17" height="15" viewBox="0 0 17 15"><path d="M8.5 1 V12.5 M2.5 3.5 H14.5 M4.5 13 H12.5" stroke="#333" stroke-width="1.4"/><path d="M2.5 3.5 L0.8 8.5 H4.2 Z M14.5 3.5 L12.8 8.5 H16.2 Z" fill="none" stroke="#333" stroke-width="1.1" stroke-linejoin="round"/></svg>
<div class="a" style="left:0px;top:614px;width:31px;height:23px;background:#f4f4f4;"></div>
<div class="a" style="left:31px;top:614px;width:1169px;height:23px;background:#e3e3e3;"></div>
<svg style="left:7px;top:620px;" width="18" height="14" viewBox="0 0 18 14"><path d="M1 4 H9 V11 H1 Z" fill="#222"/><circle cx="10" cy="7.5" r="4.2" fill="#f4f4f4" stroke="#222" stroke-width="1.6"/><path d="M13 10.5 L16 13.5" stroke="#222" stroke-width="1.8"/></svg>
<div class="a" style="left:31px;top:614px;width:31px;height:22px;background:#dcdcdc;"></div>
<svg style="left:38px;top:618px;" width="16" height="16" viewBox="0 0 16 16"><path d="M8 2 V14 M2 8 H14" stroke="#555" stroke-width="2.2"/></svg>
<div class="a" style="left:62px;top:614px;width:155px;height:22px;background:#ffffff;"></div>
<div class="a" style="left:62px;top:633.5px;width:155px;height:2px;background:#4d72aa;"></div>
<svg style="left:69px;top:616px;" width="15" height="15" viewBox="0 0 15 15"><path d="M1.5 4 L4 1.5 H13 V11 L10.5 13.5 H1.5 Z" fill="#fff" stroke="#333" stroke-width="1"/><path d="M1.5 4 H10.5 V13.5 M10.5 4 L13 1.5" fill="none" stroke="#333" stroke-width="1"/><rect x="3" y="5.5" width="6" height="6.5" fill="#999"/></svg>
<div class="t" style="left:87.70px;top:620.17px;font-size:11px;color:#333;transform:scaleX(0.979);transform-origin:0.00px 0;">Assembly 1</div>
<div class="a" style="left:218.6px;top:614px;width:156.9px;height:21px;background:#ebebeb;border-radius:0 0 5px 5px;box-shadow:0 1px 0 #d2d2d2;"></div>
<svg style="left:228.9px;top:617px;" width="14" height="15" viewBox="0 0 14 15"><path d="M1.5 5 V13.5 H6 V5 Q6 3 3.8 3 Q1.5 3 1.5 5 Z" fill="#fff" stroke="#333" stroke-width="1"/><path d="M6.5 3 V13.5 H12 V3 Q12 1.2 9.2 1.2 Q6.5 1.2 6.5 3 Z" fill="#fff" stroke="#333" stroke-width="1"/></svg>
<div class="t" style="left:245.90px;top:620.17px;font-size:11px;color:#555;transform:scaleX(0.955);transform-origin:0.00px 0;">Part Studio 1</div>
<div class="a" style="left:377px;top:614px;width:156.79999999999995px;height:21px;background:#ebebeb;border-radius:0 0 5px 5px;box-shadow:0 1px 0 #d2d2d2;"></div>
<svg style="left:386.3px;top:617px;" width="14" height="15" viewBox="0 0 14 15"><path d="M1.5 5 V13.5 H6 V5 Q6 3 3.8 3 Q1.5 3 1.5 5 Z" fill="#fff" stroke="#333" stroke-width="1"/><path d="M6.5 3 V13.5 H12 V3 Q12 1.2 9.2 1.2 Q6.5 1.2 6.5 3 Z" fill="#fff" stroke="#333" stroke-width="1"/></svg>
<div class="t" style="left:403.30px;top:620.17px;font-size:11px;color:#555;transform:scaleX(1.012);transform-origin:0.00px 0;">elevtor</div>
<div class="a" style="left:535px;top:614px;width:156.70000000000005px;height:21px;background:#ebebeb;border-radius:0 0 5px 5px;box-shadow:0 1px 0 #d2d2d2;"></div>
<svg style="left:544px;top:617px;" width="14" height="15" viewBox="0 0 14 15"><path d="M1.5 5 V13.5 H6 V5 Q6 3 3.8 3 Q1.5 3 1.5 5 Z" fill="#fff" stroke="#333" stroke-width="1"/><path d="M6.5 3 V13.5 H12 V3 Q12 1.2 9.2 1.2 Q6.5 1.2 6.5 3 Z" fill="#fff" stroke="#333" stroke-width="1"/></svg>
<div class="t" style="left:561.05px;top:620.17px;font-size:11px;color:#555;">wing airfoil</div>
<div class="a" style="left:693px;top:614px;width:157px;height:21px;background:#ebebeb;border-radius:0 0 5px 5px;box-shadow:0 1px 0 #d2d2d2;"></div>
<svg style="left:702px;top:617px;" width="14" height="15" viewBox="0 0 14 15"><path d="M1.5 5 V13.5 H6 V5 Q6 3 3.8 3 Q1.5 3 1.5 5 Z" fill="#fff" stroke="#333" stroke-width="1"/><path d="M6.5 3 V13.5 H12 V3 Q12 1.2 9.2 1.2 Q6.5 1.2 6.5 3 Z" fill="#fff" stroke="#333" stroke-width="1"/></svg>
<div class="t" style="left:719.00px;top:620.17px;font-size:11px;color:#555;transform:scaleX(0.986);transform-origin:0.00px 0;">fusalage</div>
<div class="a" style="left:851px;top:614px;width:156.70000000000005px;height:21px;background:#ebebeb;border-radius:0 0 5px 5px;box-shadow:0 1px 0 #d2d2d2;"></div>
<svg style="left:859.7px;top:617px;" width="14" height="15" viewBox="0 0 14 15"><path d="M1.5 5 V13.5 H6 V5 Q6 3 3.8 3 Q1.5 3 1.5 5 Z" fill="#fff" stroke="#333" stroke-width="1"/><path d="M6.5 3 V13.5 H12 V3 Q12 1.2 9.2 1.2 Q6.5 1.2 6.5 3 Z" fill="#fff" stroke="#333" stroke-width="1"/></svg>
<div class="t" style="left:876.75px;top:620.17px;font-size:11px;color:#555;transform:scaleX(0.984);transform-origin:-0.06px 0;">wing</div>
<div class="a" style="left:1009px;top:614px;width:156.5px;height:21px;background:#ebebeb;border-radius:0 0 5px 5px;box-shadow:0 1px 0 #d2d2d2;"></div>
<svg style="left:1017.3px;top:617px;" width="14" height="15" viewBox="0 0 14 15"><rect x="2" y="1.5" width="10" height="12" rx="1" fill="#fff" stroke="#333" stroke-width="1.1"/><path d="M5 1.5 V8 L7 10 V13.5 M9 1.5 V5 H6" fill="none" stroke="#333" stroke-width="1"/></svg>
<div class="t" style="left:1034.30px;top:620.17px;font-size:11px;color:#555;transform:scaleX(1.012);transform-origin:0.00px 0;">a2212-1000-kv-bldc-br...</div>
<div class="a" style="left:0px;top:637px;width:1200px;height:38px;background:#1e1f24;"></div>
<svg style="left:486px;top:646px;" width="20" height="20" viewBox="0 0 20 20"><defs><linearGradient id="wl" x1="0" y1="0" x2="1" y2="1"><stop offset="0" stop-color="#7fd3fb"/><stop offset="1" stop-color="#1d8fe0"/></linearGradient></defs><rect x="1" y="1" width="8.6" height="8.6" rx="0.8" fill="url(#wl)"/><rect x="10.4" y="1" width="8.6" height="8.6" rx="0.8" fill="url(#wl)"/><rect x="1" y="10.4" width="8.6" height="8.6" rx="0.8" fill="url(#wl)"/><rect x="10.4" y="10.4" width="8.6" height="8.6" rx="0.8" fill="url(#wl)"/></svg>
<svg style="left:521px;top:646px;" width="21" height="19" viewBox="0 0 21 19"><path d="M1 3 H8 L10 5 H20 V17 H1 Z" fill="#e8a819"/><rect x="1" y="6.5" width="19" height="10.5" fill="#ffd24a"/><rect x="6" y="13" width="9" height="3" fill="#2a7ad8"/></svg>
<svg style="left:556px;top:646px;" width="21" height="21" viewBox="0 0 21 21"><circle cx="10.5" cy="10" r="8" fill="none" stroke="#27d045" stroke-width="2.2"/><path d="M3.5 14.5 L2 19 L6.8 17.6" fill="#27d045"/><path d="M7.2 6.5 Q6.5 8.5 8.5 11 Q11 13.8 13.8 13.5 L14 12 L12.2 11 L11.3 11.8 Q9.5 11 8.8 9.3 L9.6 8.5 L8.8 6.5 Z" fill="#27d045"/></svg>
<svg style="left:591px;top:646px;" width="18" height="20" viewBox="0 0 18 20"><path d="M9 1 L14 2 L17 5 L15.5 13 L9 19 L2.5 13 L1 5 L4 2 Z" fill="#f15a24"/><path d="M6 7 L9 9 L12 7 M7 12 L9 14 L11 12" fill="none" stroke="#fff" stroke-width="1.4"/></svg>
<div class="a" style="left:596.5px;top:669px;width:7px;height:2px;background:#8a8a8a;border-radius:1px;"></div>
<div class="a" style="left:619.5px;top:640px;width:30px;height:32px;background:#2d2e33;border-radius:4px;"></div>
<svg style="left:624px;top:646px;" width="20" height="20" viewBox="0 0 20 20"><circle cx="10" cy="10" r="9" fill="#ea4335"/><path d="M10 10 L1.5 7 A9 9 0 0 0 8 18.8 Z" fill="#34a853"/><path d="M10 10 L8 18.8 A9 9 0 0 0 19 9.5 L18.5 6.5 Z" fill="#fbbc04"/><circle cx="10" cy="10" r="4.6" fill="#fff"/><circle cx="10" cy="10" r="3.5" fill="#1a73e8"/></svg>
<div class="a" style="left:628.5px;top:669px;width:12px;height:3px;background:#6cb8f0;border-radius:1.5px;"></div>
<svg style="left:659px;top:646px;" width="21" height="21" viewBox="0 0 21 21"><circle cx="10" cy="11" r="9" fill="#5865f2"/><path d="M5.5 8.5 Q10 6.5 14.5 8.5 L15 13.5 Q10 16 5 13.5 Z" fill="#fff"/><circle cx="8" cy="11.5" r="1.2" fill="#5865f2"/><circle cx="12" cy="11.5" r="1.2" fill="#5865f2"/></svg>
<svg style="left:670px;top:641px;" width="14" height="14" viewBox="0 0 14 14"><circle cx="7" cy="7" r="6" fill="#e5484d"/></svg>
<div class="t" style="left:675.00px;top:644.56px;font-size:8px;color:#fff;font-weight:bold;transform:scaleX(0.901);transform-origin:0.00px 0;">1</div>
<div class="a" style="left:666px;top:669px;width:7px;height:2px;background:#8a8a8a;border-radius:1px;"></div>
<svg style="left:693px;top:646px;" width="21" height="21" viewBox="0 0 21 21"><polygon points="20.00,10.50 16.82,13.12 17.22,17.22 13.12,16.82 10.50,20.00 7.88,16.82 3.78,17.22 4.18,13.12 1.00,10.50 4.18,7.88 3.78,3.78 7.88,4.18 10.50,1.00 13.12,4.18 17.22,3.78 16.82,7.88" fill="#8e9199" stroke="#8e9199" stroke-width="1.2" stroke-linejoin="round"/><circle cx="10.5" cy="10.5" r="3.32" fill="#2a6fd0"/></svg>
<div class="a" style="left:700px;top:669px;width:7px;height:2px;background:#8a8a8a;border-radius:1px;"></div>
<svg style="left:939px;top:651px;" width="12" height="9" viewBox="0 0 12 9"><path d="M1.5 7.5 L6 3 L10.5 7.5" fill="none" stroke="#eee" stroke-width="1.6"/></svg>
<svg style="left:962px;top:648px;" width="18" height="14" viewBox="0 0 18 14"><path d="M4 11 Q1 11 1.5 8 Q2 5.5 5 6 Q6 3 9.5 3.5 Q13 4 13 7 Q16 7 16 9.5 Q16 11 14 11 Z" fill="#a8a8a8"/><path d="M3 2 L15 13" stroke="#1e1f24" stroke-width="2"/><path d="M3 2 L15 13" stroke="#aaa" stroke-width="1"/></svg>
<div class="t" style="left:991.20px;top:645.38px;font-size:10.5px;color:#f0f0f0;transform:scaleX(0.818);transform-origin:0.00px 0;">ENG</div>
<div class="t" style="left:995.80px;top:657.78px;font-size:10.5px;color:#f0f0f0;transform:scaleX(0.895);transform-origin:0.00px 0;">IN</div>
<svg style="left:1022px;top:649px;" width="15" height="12" viewBox="0 0 15 12"><path d="M2 5 Q7.5 0.5 13 5 M4 7.5 Q7.5 4.5 11 7.5" fill="none" stroke="#ddd" stroke-width="1.3"/><circle cx="7.5" cy="10" r="1.3" fill="#eee"/></svg>
<svg style="left:1040px;top:648px;" width="17" height="14" viewBox="0 0 17 14"><path d="M1.5 5 H4 L8 1.5 V12.5 L4 9 H1.5 Z" fill="none" stroke="#eee" stroke-width="1.2"/><path d="M10.5 4.5 Q12 7 10.5 9.5 M12.8 2.8 Q15.5 7 12.8 11.2" fill="none" stroke="#eee" stroke-width="1.2"/></svg>
<svg style="left:1059px;top:647px;" width="17" height="15" viewBox="0 0 17 15"><rect x="2" y="5" width="12" height="8" rx="1.5" fill="none" stroke="#eee" stroke-width="1.3"/><rect x="14" y="7.5" width="1.8" height="3" fill="#eee"/><path d="M5 2 L3.5 6 H6 L4.5 10" fill="none" stroke="#eee" stroke-width="1.2"/><rect x="3.5" y="6.5" width="9" height="5" fill="#eee" opacity="0.9"/></svg>
<div class="t" style="left:1112.50px;top:645.38px;font-size:10.5px;color:#f0f0f0;transform:scaleX(0.844);transform-origin:0.00px 0;">19:25</div>
<div class="t" style="left:1086.10px;top:657.78px;font-size:10.5px;color:#f0f0f0;transform:scaleX(0.905);transform-origin:0.00px 0;">01-08-2024</div>
<svg style="left:1139px;top:648px;" width="15" height="16" viewBox="0 0 15 16"><path d="M7.5 1.5 Q3 1.5 3 6.5 V10 L1.5 12 H13.5 L12 10 V6.5 Q12 1.5 7.5 1.5 Z M5.8 13.2 A1.8 1.8 0 0 0 9.2 13.2" fill="#8fd6f5"/></svg>
<svg style="left:1165px;top:645px;" width="22" height="22" viewBox="0 0 22 22"><path d="M5 4 Q7 1 10 2 L16 3 Q19 4 18 8 L16 14 Q15 17 11 17 H5 Q2 17 2.5 13 Z" fill="#3f8ee8"/><path d="M10 2 L16 3 Q19 4 18 8 L16 12 H10 Z" fill="#c04fd6"/><path d="M2.5 13 Q3 9 6 9 H11 L10 17 H5 Q2 17 2.5 13 Z" fill="#4dd0a1"/><rect x="7" y="13.5" width="13" height="7" rx="1.5" fill="#f5c518"/><text x="13.5" y="19.3" font-family="Liberation Sans" font-size="5.5" font-weight="bold" fill="#222" text-anchor="middle">PRE</text></svg>
</body></html>
